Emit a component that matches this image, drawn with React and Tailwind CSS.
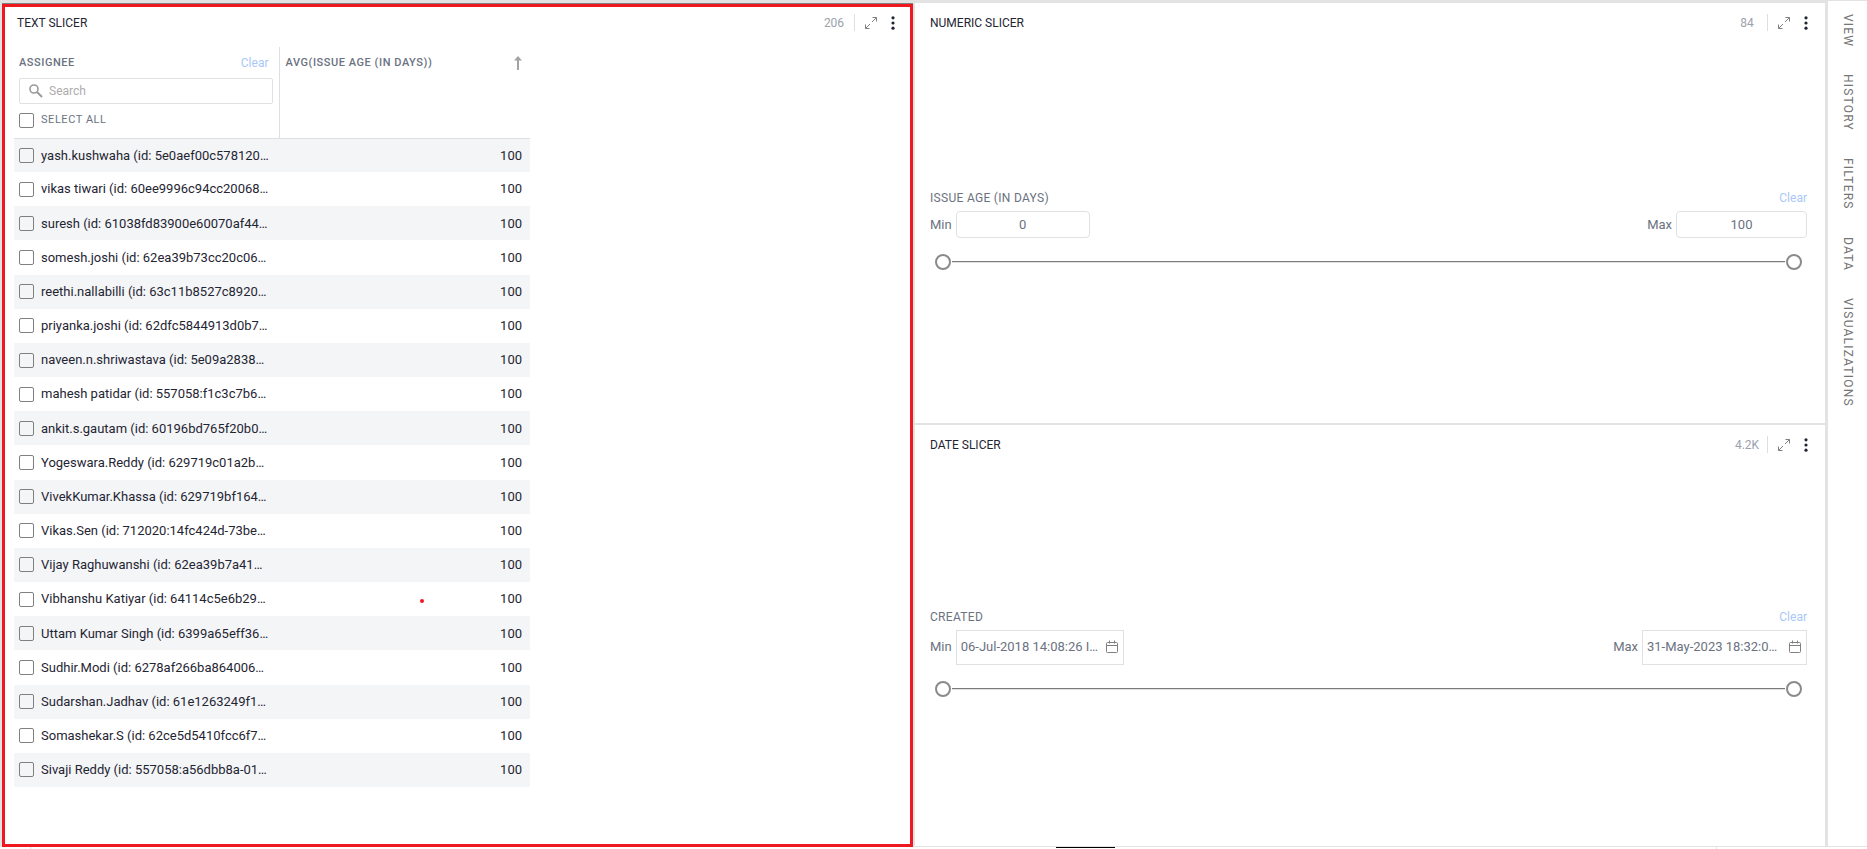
import React, { useState } from 'react'

const ASSIGNEES = [
  'yash.kushwaha (id: 5e0aef00c578120…',
  'vikas tiwari (id: 60ee9996c94cc20068…',
  'suresh (id: 61038fd83900e60070af44…',
  'somesh.joshi (id: 62ea39b73cc20c06…',
  'reethi.nallabilli (id: 63c11b8527c8920…',
  'priyanka.joshi (id: 62dfc5844913d0b7…',
  'naveen.n.shriwastava (id: 5e09a2838…',
  'mahesh patidar (id: 557058:f1c3c7b6…',
  'ankit.s.gautam (id: 60196bd765f20b0…',
  'Yogeswara.Reddy (id: 629719c01a2b…',
  'VivekKumar.Khassa (id: 629719bf164…',
  'Vikas.Sen (id: 712020:14fc424d-73be…',
  'Vijay Raghuwanshi (id: 62ea39b7a41…',
  'Vibhanshu Katiyar (id: 64114c5e6b29…',
  'Uttam Kumar Singh (id: 6399a65eff36…',
  'Sudhir.Modi (id: 6278af266ba864006…',
  'Sudarshan.Jadhav (id: 61e1263249f1…',
  'Somashekar.S (id: 62ce5d5410fcc6f7…',
  'Sivaji Reddy (id: 557058:a56dbb8a-01…',
]

const TABS = ['VIEW', 'HISTORY', 'FILTERS', 'DATA', 'VISUALIZATIONS']

const CHECKBOX =
  'block h-[15px] w-[15px] shrink-0 appearance-none rounded-xs border border-[#808080] checked:bg-[#4a90e2]'

const RANGE =
  'pointer-events-none col-start-1 row-start-1 h-4 w-full appearance-none bg-transparent outline-none [&::-webkit-slider-thumb]:pointer-events-auto [&::-webkit-slider-thumb]:h-4 [&::-webkit-slider-thumb]:w-4 [&::-webkit-slider-thumb]:appearance-none [&::-webkit-slider-thumb]:rounded-full [&::-webkit-slider-thumb]:border-2 [&::-webkit-slider-thumb]:border-[#8a8a8a] [&::-webkit-slider-thumb]:bg-white'

function ExpandIcon() {
  return (
    <svg width="12" height="12" viewBox="0 0 12 12" fill="none" stroke="#808080">
      <path d="M7.5 0.5H11.5V4.5M11.5 0.5L7 5M4.5 11.5H0.5V7.5M0.5 11.5L5 7" />
    </svg>
  )
}

function DotsIcon() {
  return (
    <svg width="4" height="14" viewBox="0 0 4 14" fill="#1f2533">
      <circle cx="2" cy="1.8" r="1.6" />
      <circle cx="2" cy="7" r="1.6" />
      <circle cx="2" cy="12.2" r="1.6" />
    </svg>
  )
}

function SearchIcon() {
  return (
    <svg width="14" height="14" viewBox="0 0 14 14" fill="none" stroke="#9a9a9a">
      <circle cx="5" cy="5" r="4" strokeWidth="1.6" />
      <path d="M8 8L13 13" strokeWidth="2" />
    </svg>
  )
}

function SortIcon() {
  return (
    <svg width="8" height="14" viewBox="0 0 8 14" fill="#a3a3a3">
      <path d="M4 0L8 4.5H5V14H3V4.5H0Z" />
    </svg>
  )
}

function CalendarIcon() {
  return (
    <svg width="12" height="14" viewBox="0 0 12 14" fill="none" stroke="#808080">
      <rect x="0.5" y="2.5" width="11" height="10" rx="1" />
      <path d="M0.5 5.5H11.5M3.5 0.5V3.5M8.5 0.5V3.5" />
    </svg>
  )
}

function PanelHeader({ title, count, className }) {
  return (
    <header className={`flex shrink-0 items-center justify-between ${className}`}>
      <h2 className="text-xs leading-4 text-[#1f2533]">{title}</h2>
      <div className="flex items-center">
        <span className="w-10 text-center text-xs leading-4 text-[#9ba1ad]">{count}</span>
        <span className="h-[17px] w-px bg-[#dcdfe3]" />
        <button type="button" aria-label={`Expand ${title}`} className="ml-[10px]">
          <ExpandIcon />
        </button>
        <button type="button" aria-label={`${title} menu`} className="ml-[14px]">
          <DotsIcon />
        </button>
      </div>
    </header>
  )
}

function RangeSlider({ label }) {
  const [low, setLow] = useState(0)
  const [high, setHigh] = useState(100)
  return (
    <div className="mx-[5px] grid items-center">
      <div className="col-start-1 row-start-1 mx-[17px] h-[2px] border-b border-[#e0e0e0] bg-[#7b7b7b]" />
      <input
        type="range"
        aria-label={`${label} minimum`}
        value={low}
        onChange={(e) => setLow(Math.min(Number(e.target.value), high))}
        className={RANGE}
      />
      <input
        type="range"
        aria-label={`${label} maximum`}
        value={high}
        onChange={(e) => setHigh(Math.max(Number(e.target.value), low))}
        className={RANGE}
      />
    </div>
  )
}

function SlicerLabel({ children }) {
  return (
    <div className="flex items-center justify-between leading-4">
      <h3 className="text-xs leading-4 tracking-wide text-[#6b7280]">{children}</h3>
      <button type="button" className="text-xs text-[#a8c8f8]">
        Clear
      </button>
    </div>
  )
}

function NumberField({ label, defaultValue, className }) {
  return (
    <label className="flex items-center gap-1 text-[13px] text-[#6b7280]">
      {label}
      <input
        type="text"
        defaultValue={defaultValue}
        className={`h-[27px] rounded border border-[#dfe1e5] text-center text-[13px] ${className}`}
      />
    </label>
  )
}

function DateField({ label, defaultValue, className }) {
  return (
    <label className="flex items-center gap-1 text-[13px] text-[#6b7280]">
      {label}
      <span className={`flex h-[35px] items-center border border-[#dfe1e5] pr-[5px] pl-1 ${className}`}>
        <input type="text" defaultValue={defaultValue} className="min-w-0 flex-1 text-[13px] outline-none" />
        <CalendarIcon />
      </span>
    </label>
  )
}

function TextSlicer() {
  return (
    <section className="relative flex min-h-0 flex-1 flex-col border-3 border-[#f01820] bg-white">
      <PanelHeader title="TEXT SLICER" count="206" className="h-[31px] pr-[15px] pl-3" />
      <table className="mt-[9px] ml-[9px] h-[740px] w-[516px] table-fixed border-collapse">
        <thead>
          <tr className="h-[91px] border-b border-[#dcdfe3] align-top">
            <th className="w-[265px] border-r border-[#dcdfe3] pr-[6px] pl-[5px] text-left font-normal">
              <div className="mt-2 flex items-center justify-between leading-4">
                <span className="text-[11px] font-medium tracking-wider text-[#6b7280]">ASSIGNEE</span>
                <button type="button" className="mr-1 text-xs text-[#a8c8f8]">
                  Clear
                </button>
              </div>
              <label className="mt-[7px] flex h-[26px] items-center gap-[6px] rounded-xs border border-[#dfe1e5] pl-[9px]">
                <SearchIcon />
                <input
                  type="text"
                  placeholder="Search"
                  aria-label="Search assignee"
                  className="min-w-0 flex-1 text-xs outline-none placeholder:text-[#adadad]"
                />
              </label>
              <label className="mt-[7px] flex items-end gap-[7px] text-[11px] leading-4 tracking-wider text-[#6b7280]">
                <input type="checkbox" className={CHECKBOX} />
                <span className="pt-px">SELECT ALL</span>
              </label>
            </th>
            <th className="pr-2 pl-[6px] font-medium">
              <div className="mt-2 flex items-center justify-between text-[11px] leading-4 tracking-wider text-[#6b7280]">
                AVG(ISSUE AGE (IN DAYS))
                <button type="button" aria-label="Sort ascending">
                  <SortIcon />
                </button>
              </div>
            </th>
          </tr>
        </thead>
        <tbody>
          {ASSIGNEES.map((name) => (
            <tr key={name} className="h-[34px] text-[13px] text-[#1f2533] odd:bg-[#f4f5f7]">
              <td className="pl-[5px]">
                <label className="flex items-center gap-[7px] whitespace-nowrap">
                  <input type="checkbox" className={CHECKBOX} />
                  {name}
                </label>
              </td>
              <td className="pr-2 text-right">100</td>
            </tr>
          ))}
        </tbody>
      </table>
      <span className="absolute top-[592px] left-[415px] h-1 w-1 rounded-full bg-[#f01820]" />
    </section>
  )
}

function NumericSlicer() {
  return (
    <section className="flex flex-col bg-white">
      <PanelHeader title="NUMERIC SLICER" count="84" className="h-[39px] pr-[17px] pl-[15px]" />
      <div className="flex flex-1 flex-col justify-center pr-[18px] pb-[5px] pl-[15px]">
        <SlicerLabel>ISSUE AGE (IN DAYS)</SlicerLabel>
        <div className="mt-[5px] mb-4 flex justify-between">
          <NumberField label="Min" defaultValue="0" className="w-[134px]" />
          <NumberField label="Max" defaultValue="100" className="w-[131px]" />
        </div>
        <RangeSlider label="Issue age" />
      </div>
    </section>
  )
}

function DateSlicer() {
  return (
    <section className="flex flex-col bg-white">
      <PanelHeader title="DATE SLICER" count="4.2K" className="h-[39px] pr-[17px] pl-[15px]" />
      <div className="flex flex-1 flex-col justify-center pr-[18px] pb-[5px] pl-[15px]">
        <SlicerLabel>CREATED</SlicerLabel>
        <div className="mt-[5px] mb-4 flex justify-between">
          <DateField label="Min" defaultValue="06-Jul-2018 14:08:26 I…" className="w-[168px]" />
          <DateField label="Max" defaultValue="31-May-2023 18:32:0…" className="w-[165px]" />
        </div>
        <RangeSlider label="Created" />
      </div>
    </section>
  )
}

export default function App() {
  return (
    <div className="flex h-screen min-h-[849px] flex-col bg-white font-['Roboto',sans-serif]">
      <div className="flex min-h-0 flex-1 border-t border-[#e3e3e3]">
        <main className="grid flex-1 grid-cols-[915fr_910fr] bg-[#e3e3e3] pt-[2px]">
          <div className="flex flex-col px-[2px]">
            <div className="h-px shrink-0 bg-[#808080]" />
            <TextSlicer />
          </div>
          <div className="grid grid-rows-[420fr_421fr] gap-[2px] pb-px">
            <NumericSlicer />
            <DateSlicer />
          </div>
        </main>
        <nav className="flex w-[42px] flex-col items-center gap-[27px] border-b border-l-3 border-[#e3e3e3] pt-[13px]">
          {TABS.map((tab) => (
            <button
              key={tab}
              type="button"
              className="text-xs leading-4 tracking-widest text-[#757575] [writing-mode:vertical-rl]"
            >
              {tab}
            </button>
          ))}
        </nav>
      </div>
      <div className="grid h-[2px] shrink-0 grid-cols-[1056fr_59fr_601fr_151fr]">
        <span className="ml-[30px] w-px bg-[#e3e3e3]" />
        <span className="h-px bg-black" />
        <span />
        <span className="w-px bg-[#e3e3e3]" />
      </div>
    </div>
  )
}
